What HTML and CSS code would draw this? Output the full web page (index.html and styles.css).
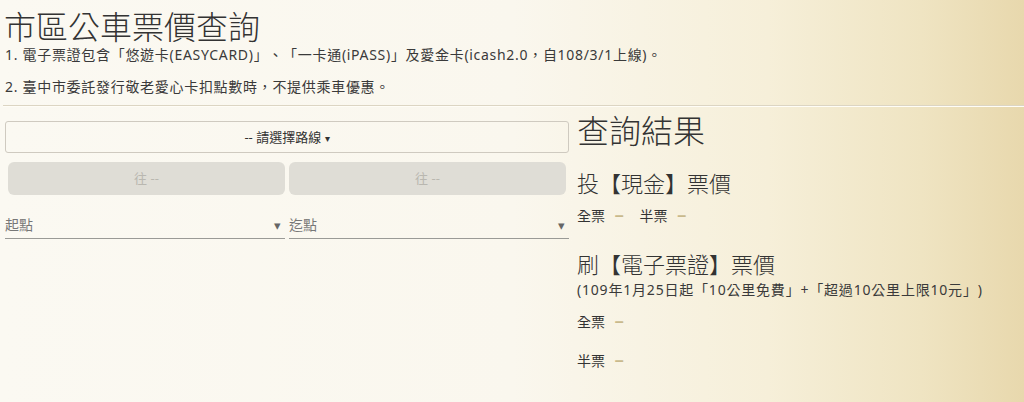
FILE: index.html
```html
<!DOCTYPE html>
<html lang="zh-tw">
<head>
    <meta charset="UTF-8">
    <meta name="viewport" content="width=device-width, initial-scale=1.0">
    <title>市區公車票價查詢</title>
    <link rel="stylesheet" href="styles.css">
</head>
<body>
    <div id="principal">
        <h1 class="titulo">市區公車票價查詢</h1>
        <p class="nota">1. 電子票證包含「悠遊卡(EASYCARD)」、「一卡通(iPASS)」及愛金卡(icash2.0，自108/3/1上線)。</p>
        <p class="nota">2. 臺中市委託發行敬老愛心卡扣點數時，不提供乘車優惠。</p>
        <hr class="linha">

        <div class="conteudo">
            <div class="consulta">
                <div class="rota">-- 請選擇路線 <span class="seta">&#9662;</span></div>
                <div class="sentidos">
                    <div class="sentido">往 --</div>
                    <div class="sentido">往 --</div>
                </div>
                <div class="paradas">
                    <div class="parada">起點 <span class="caret">&#9662;</span></div>
                    <div class="parada">迄點 <span class="caret">&#9662;</span></div>
                </div>
            </div>

            <div class="resultado">
                <h2 class="res-titulo">查詢結果</h2>
                <h3 class="tipo">投【現金】票價</h3>
                <div class="precos">
                    <span>全票 <b class="traco">&ndash;</b></span>
                    <span>半票 <b class="traco">&ndash;</b></span>
                </div>

                <h3 class="tipo tipo-cartao">刷【電子票證】票價</h3>
                <div class="obs">(109年1月25日起「10公里免費」+「超過10公里上限10元」)</div>
                <div class="linha-preco">全票 <b class="traco">&ndash;</b></div>
                <div class="linha-preco">半票 <b class="traco">&ndash;</b></div>
            </div>
        </div>
    </div>
</body>
</html>
```

FILE: styles.css
```css
*{
    box-sizing: border-box;
}

body{
    margin: 0;
    font-family: "Noto Sans", "Noto Sans CJK TC", sans-serif;
    color: #333;
    height: 402px;
    text-spacing-trim: space-all;
    background: linear-gradient(to right, #fbf9f2 0%, #faf7ee 50%, #f6efd9 75%, #efe4c2 90%, #e8d8ad 100%);
}

#principal{
    padding: 0 0 0 5px;
}

.titulo, .res-titulo, .tipo{
    font-family: "Noto Sans CJK TC", sans-serif;
    font-weight: 300;
    color: #333;
}

.titulo{
    font-size: 32px;
    line-height: 32px;
    margin: 9px 0 0 -1px;
}

.nota{
    font-size: 14px;
    letter-spacing: 0.7px;
    margin: 0 0 4px;
    line-height: 28px;
    color: #3a3a3a;
}

.linha{
    margin: 3px 0 0 -2px;
    border: 0;
    border-top: 1px solid #dcd5c3;
    border-bottom: 1px solid #fffdf6;
}

.conteudo{
    display: grid;
    grid-template-columns: 564px 1fr;
    column-gap: 8px;
}

.consulta{
    padding-top: 14px;
}

.rota{
    height: 32px;
    border: 1px solid #cfcac0;
    border-radius: 3px;
    text-align: center;
    font-size: 13px;
    line-height: 30px;
    color: #333;
}

.seta{
    font-size: 10px;
}

.sentidos{
    display: flex;
    gap: 4px;
    padding: 0 3px;
    margin-top: 9px;
}

.sentido{
    flex: 1;
    height: 33px;
    line-height: 33px;
    background-color: #dfddd6;
    border-radius: 6px;
    text-align: center;
    font-size: 13px;
    color: #b9b7b0;
}

.paradas{
    display: flex;
    gap: 4px;
    margin-top: 17px;
}

.parada{
    flex: 1;
    display: flex;
    justify-content: space-between;
    font-size: 14px;
    color: #777;
    height: 27px;
    line-height: 26px;
    border-bottom: 1px solid #9a9a96;
}

.caret{
    font-size: 13px;
    color: #666;
    padding-right: 4px;
}

.resultado{
    padding-top: 4px;
}

.res-titulo{
    font-size: 32px;
    line-height: 36px;
    margin: 0;
}

.tipo{
    font-size: 22px;
    line-height: 30px;
    margin: 20px 0 0;
}

.precos{
    font-size: 14px;
    margin-top: 9px;
    line-height: 20px;
    display: flex;
    gap: 16px;
}

.traco{
    font-family: "Liberation Sans", sans-serif;
    font-size: 16px;
    color: #c9b98c;
    font-weight: 700;
    margin-left: 6px;
}

.tipo-cartao{
    margin-top: 22px;
}

.obs{
    font-size: 14px;
    letter-spacing: 0.8px;
    line-height: 20px;
    margin-top: 2px;
    color: #3a3a3a;
}

.linha-preco{
    font-size: 14px;
    line-height: 20px;
    margin-top: 12px;
}

.linha-preco + .linha-preco{
    margin-top: 19px;
}
```
